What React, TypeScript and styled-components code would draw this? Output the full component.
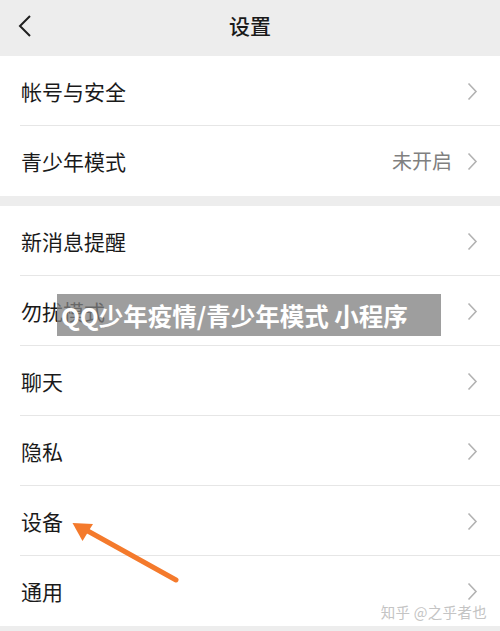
import React from "react";
import styled, { createGlobalStyle } from "styled-components";

const GlobalStyle = createGlobalStyle`
  html, body { margin: 0; padding: 0; }
  body {
    background: #ededed;
    font-family: "Noto Sans CJK SC", "Noto Sans", sans-serif;
  }
`;

const Page = styled.div`
  position: relative;
  width: 500px;
  height: 631px;
  overflow: hidden;
  background: #ededed;
`;

const Header = styled.header`
  height: 56px;
  box-sizing: border-box;
  padding-bottom: 5px;
  display: grid;
  grid-template-columns: 60px 1fr 60px;
  align-items: center;
  background: #ededed;
`;

const BackButton = styled.div`
  padding-left: 18px;
  display: flex;
  align-items: center;
`;

const Title = styled.h1`
  margin: 0;
  text-align: center;
  font-size: 21px;
  font-weight: 500;
  color: #1a1a1a;
  line-height: 1;
`;

const Group = styled.section`
  background: #ffffff;
  margin-bottom: 10px;
`;

const Row = styled.div<{ $last?: boolean }>`
  position: relative;
  height: 70px;
  box-sizing: border-box;
  display: flex;
  align-items: center;
  padding: 0 22px 0 21px;
  &::after {
    content: "";
    display: ${(p) => (p.$last ? "none" : "block")};
    position: absolute;
    left: 20px;
    right: 0;
    bottom: 0;
    height: 1px;
    background: #e6e6e6;
  }
`;

const Label = styled.span`
  flex: 1;
  font-size: 21px;
  color: #1a1a1a;
  line-height: 1;
`;

const Value = styled.span`
  font-size: 20px;
  color: #808080;
  line-height: 1;
  margin-right: 15px;
`;

const Banner = styled.div`
  position: absolute;
  left: 57px;
  top: 294px;
  width: 384px;
  height: 42px;
  box-sizing: border-box;
  padding-left: 4px;
  display: flex;
  align-items: center;
  background: rgba(128, 128, 128, 0.76);
  color: #ffffff;
  font-size: 24.5px;
  font-weight: 700;
  white-space: nowrap;
`;

const ArrowLayer = styled.svg`
  position: absolute;
  left: 0;
  top: 0;
  pointer-events: none;
`;

const Watermark = styled.div`
  position: absolute;
  right: 13px;
  top: 601px;
  font-size: 14.5px;
  color: #c4c4c4;
  letter-spacing: 0.3px;
  white-space: nowrap;
`;

const Chevron = () => (
  <svg width="11" height="19" viewBox="0 0 11 19">
    <path d="M1.5 1.5 L9 9.5 L1.5 17.5" fill="none" stroke="#b2b2b2" strokeWidth="1.6" />
  </svg>
);

type Item = { label: string; value?: string };

const group1: Item[] = [{ label: "帐号与安全" }, { label: "青少年模式", value: "未开启" }];
const group2: Item[] = [
  { label: "新消息提醒" },
  { label: "勿扰模式" },
  { label: "聊天" },
  { label: "隐私" },
  { label: "设备" },
  { label: "通用" },
];

const renderGroup = (items: Item[]) => (
  <Group>
    {items.map((it, i) => (
      <Row key={it.label} $last={i === items.length - 1}>
        <Label>{it.label}</Label>
        {it.value && <Value>{it.value}</Value>}
        <Chevron />
      </Row>
    ))}
  </Group>
);

export default function App() {
  return (
    <>
      <GlobalStyle />
      <Page>
        <Header>
          <BackButton>
            <svg width="14" height="24" viewBox="0 0 14 24">
              <path d="M12 2 L2 12 L12 22" fill="none" stroke="#1f1f1f" strokeWidth="2" />
            </svg>
          </BackButton>
          <Title>设置</Title>
          <div />
        </Header>
        {renderGroup(group1)}
        {renderGroup(group2)}
        <Banner>QQ少年疫情/青少年模式 小程序</Banner>
        <ArrowLayer width="500" height="631" viewBox="0 0 500 631">
          <line x1="176" y1="580" x2="86" y2="530" stroke="#f47a2c" strokeWidth="5" strokeLinecap="round" />
          <polygon points="72.5,523 93,524 82.5,541" fill="#f47a2c" />
        </ArrowLayer>
        <Watermark>知乎 @之乎者也</Watermark>
      </Page>
    </>
  );
}
